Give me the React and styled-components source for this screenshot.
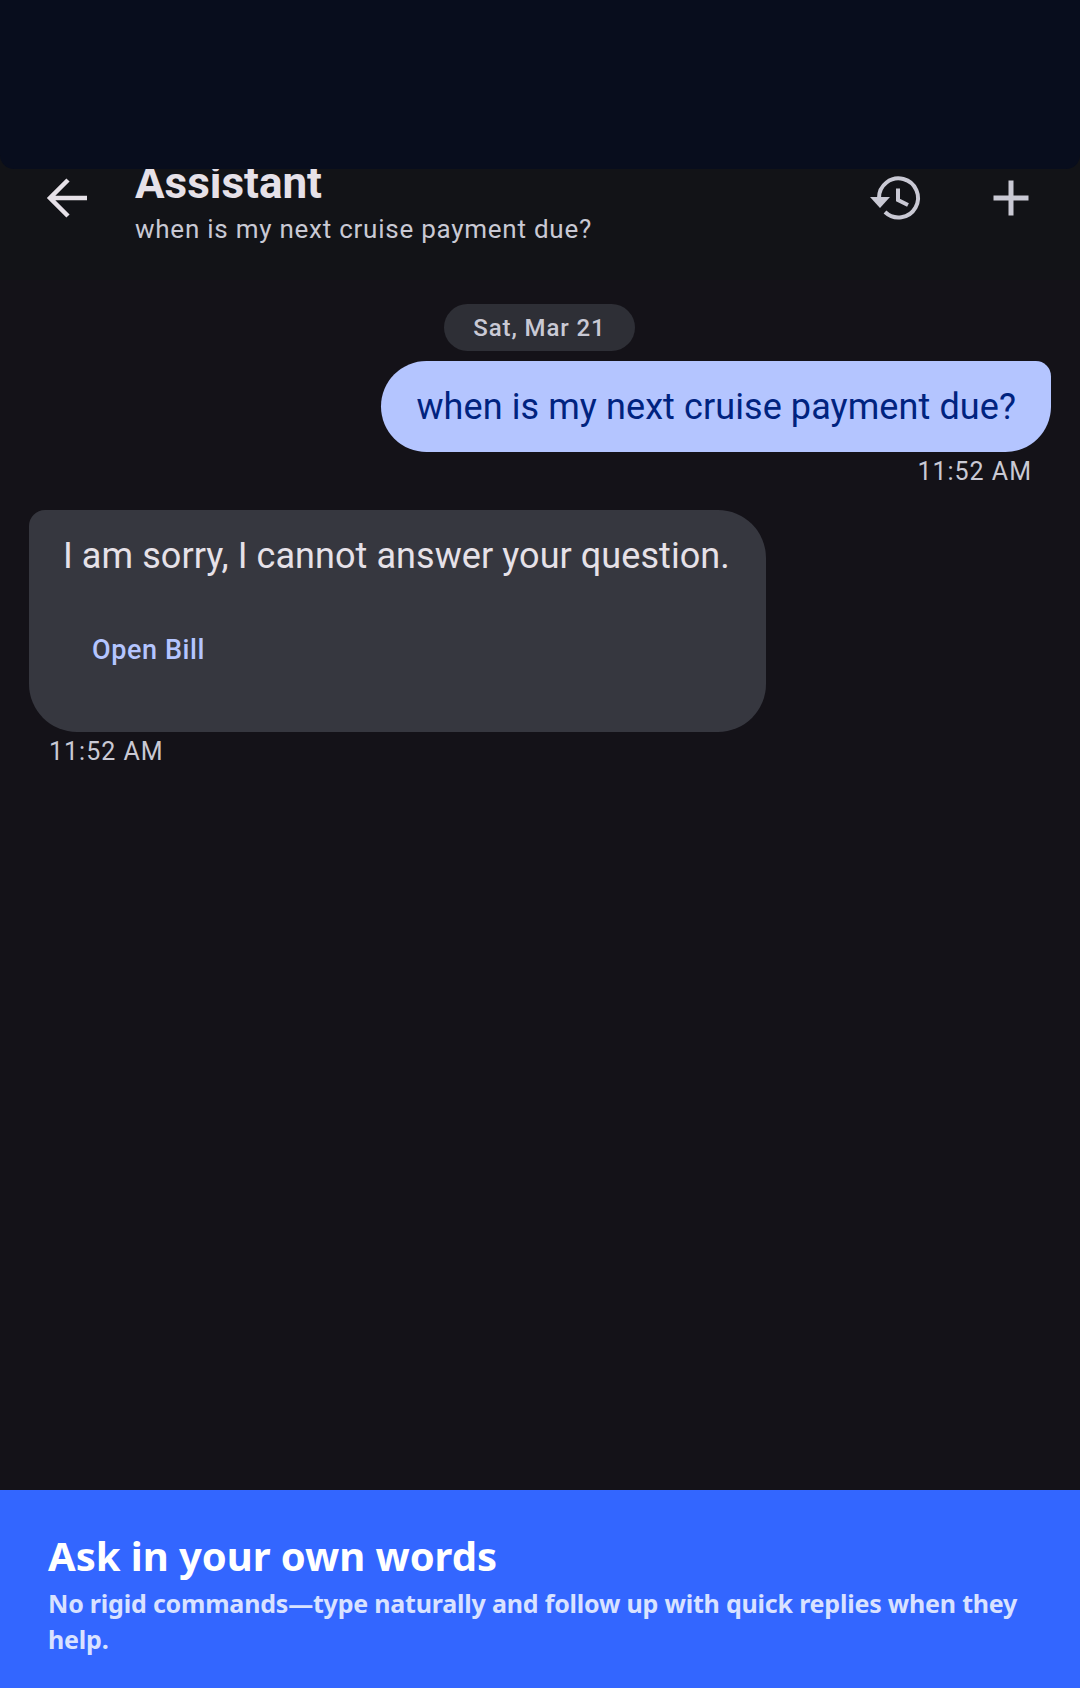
import React from "react";
import styled, { createGlobalStyle } from "styled-components";

const GlobalStyle = createGlobalStyle`
  html, body {
    margin: 0;
    padding: 0;
    background: #141218;
  }
  * {
    box-sizing: border-box;
  }
`;

const Screen = styled.div`
  position: relative;
  width: 1080px;
  height: 1688px;
  display: flex;
  flex-direction: column;
  overflow: hidden;
  background: #141218;
  font-family: Roboto, "Liberation Sans", sans-serif;
`;

const TopSheet = styled.div`
  position: absolute;
  top: 0;
  left: 0;
  width: 100%;
  height: 169px;
  background: #080d1d;
  border-radius: 0 0 14px 14px;
  z-index: 2;
`;

const Header = styled.header`
  height: 280px;
  flex: none;
  display: flex;
  align-items: flex-start;
  padding: 153px 12px 0 40px;
  background: #121317;
`;

const IconButton = styled.button`
  width: ${(props) => props.$width || 56}px;
  height: 56px;
  flex: none;
  display: flex;
  align-items: center;
  justify-content: center;
  padding: 0;
  border: 0;
  background: none;
  color: ${(props) => props.$color || "#c9c9d4"};
  margin-top: 17px;
`;

const Titles = styled.div`
  flex: 1;
  padding-left: 39px;
  display: flex;
  flex-direction: column;
`;

const Title = styled.h1`
  margin: 0;
  font-size: 44px;
  line-height: 60px;
  font-weight: 700;
  color: #e6e1e8;
`;

const Subtitle = styled.p`
  margin: 0;
  font-size: 26px;
  line-height: 33px;
  letter-spacing: 0.75px;
  color: #c9c9d4;
`;

const Thread = styled.main`
  flex: 1;
  display: flex;
  flex-direction: column;
  padding: 24px 29px 0;
`;

const DateChip = styled.div`
  align-self: center;
  width: 191px;
  height: 47px;
  margin-left: -1px;
  display: flex;
  align-items: center;
  justify-content: center;
  border-radius: 24px;
  background: #2e2f36;
  color: #c9c9d4;
  font-size: 24px;
  font-weight: 500;
  letter-spacing: 0.9px;
`;

const UserBubble = styled.div`
  align-self: flex-end;
  height: 91px;
  margin-top: 10px;
  padding: 0 35px;
  display: flex;
  align-items: center;
  border-radius: 48px 16px 48px 48px;
  background: #b4c5ff;
  color: #00237f;
  font-size: 36px;
  letter-spacing: 0.09px;
  white-space: nowrap;
`;

const Time = styled.div`
  align-self: ${(props) => (props.$right ? "flex-end" : "flex-start")};
  margin: 4px ${(props) => (props.$right ? "19px" : "0")} 0
    ${(props) => (props.$right ? "0" : "20px")};
  font-size: 25px;
  line-height: 32px;
  letter-spacing: 1px;
  color: #c9c9d4;
`;

const BotBubble = styled.div`
  align-self: flex-start;
  width: 737px;
  height: 222px;
  margin-top: 22px;
  padding: 22px 34px 0;
  border-radius: 16px 48px 48px 48px;
  background: #36373f;
`;

const BotText = styled.p`
  margin: 0;
  font-size: 36px;
  line-height: 48px;
  letter-spacing: 0.07px;
  color: #e6e1e8;
  white-space: nowrap;
`;

const ActionLink = styled.a`
  display: block;
  margin: 53px 0 0 29px;
  font-size: 27px;
  line-height: 34px;
  font-weight: 500;
  letter-spacing: 0.6px;
  color: #b4c5ff;
`;

const Coach = styled.footer`
  height: 198px;
  flex: none;
  padding: 40px 48px 0;
  background: #3366ff;
  font-family: "Noto Sans", "Open Sans", sans-serif;
`;

const CoachTitle = styled.h2`
  margin: 0;
  font-size: 40px;
  line-height: 52px;
  font-weight: 700;
  letter-spacing: -0.05px;
  color: #ffffff;
`;

const CoachText = styled.p`
  margin: 3px 0 0;
  font-size: 25px;
  line-height: 36px;
  font-weight: 700;
  letter-spacing: -0.2px;
  color: #d9e2ff;
`;

const BackIcon = () => (
  <svg width="48" height="48" viewBox="0 0 48 48" fill="none" stroke="currentColor" strokeWidth="4.5">
    <path d="M43 24H7M24 6 6 24l18 18" />
  </svg>
);

const HistoryIcon = () => (
  <svg width="56" height="56" viewBox="0 0 56 56" fill="none" stroke="currentColor" strokeWidth="4">
    <path d="M9 28A19.5 19.5 0 1 1 15 42" />
    <path d="M28 18.5V30l10 5" />
    <path d="M0 27h20L10 38z" fill="currentColor" stroke="none" />
  </svg>
);

const PlusIcon = () => (
  <svg width="60" height="60" viewBox="0 0 24 24" fill="currentColor">
    <path d="M19 13h-6v6h-2v-6H5v-2h6V5h2v6h6v2z" />
  </svg>
);

export default function App() {
  return (
    <Screen>
      <GlobalStyle />
      <TopSheet />
      <Header>
        <IconButton $color="#e6e1e8">
          <BackIcon />
        </IconButton>
        <Titles>
          <Title>Assistant</Title>
          <Subtitle>when is my next cruise payment due?</Subtitle>
        </Titles>
        <IconButton $width={112}>
          <HistoryIcon />
        </IconButton>
        <IconButton $width={114}>
          <PlusIcon />
        </IconButton>
      </Header>
      <Thread>
        <DateChip>Sat, Mar 21</DateChip>
        <UserBubble>when is my next cruise payment due?</UserBubble>
        <Time $right>11:52 AM</Time>
        <BotBubble>
          <BotText>I am sorry, I cannot answer your question.</BotText>
          <ActionLink>Open Bill</ActionLink>
        </BotBubble>
        <Time>11:52 AM</Time>
      </Thread>
      <Coach>
        <CoachTitle>Ask in your own words</CoachTitle>
        <CoachText>No rigid commands—type naturally and follow up with quick replies when they help.</CoachText>
      </Coach>
    </Screen>
  );
}
